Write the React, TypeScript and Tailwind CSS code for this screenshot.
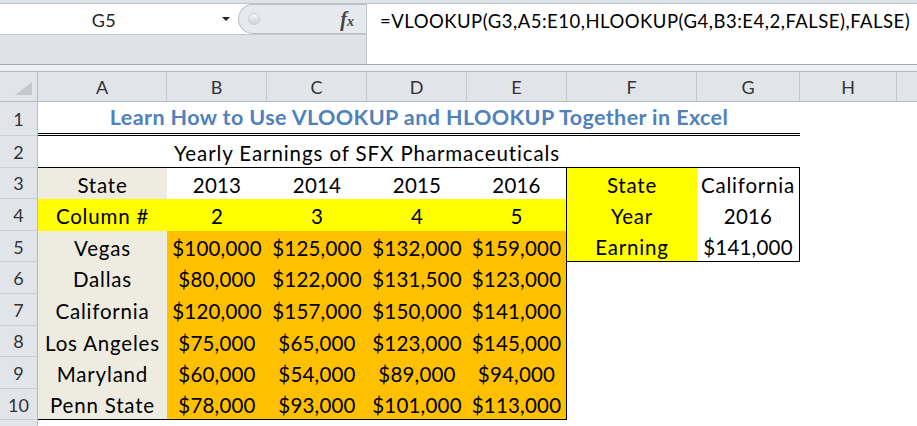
import React from 'react';

type CellProps = { cls: string; children?: React.ReactNode };

const Cell = ({ cls, children }: CellProps) => (
  <div
    className={`${cls} shrink-0 flex items-center justify-center pt-[3px] text-[20.5px] leading-none text-black whitespace-nowrap`}
  >
    {children}
  </div>
);

const Row = ({ num, hCls, children }: { num: string; hCls: string; children?: React.ReactNode }) => (
  <div className={`flex ${hCls}`}>
    <div className="w-[38px] shrink-0 flex items-center justify-center bg-[#e1e5ea] border-r border-b border-r-[#b3bac4] border-b-[#c9cfd7] text-[18px] text-[#333] pt-[2px]">
      {num}
    </div>
    {children}
  </div>
);

const states = ['Vegas', 'Dallas', 'California', 'Los Angeles', 'Maryland', 'Penn State'];
const values = [
  ['$100,000', '$125,000', '$132,000', '$159,000'],
  ['$80,000', '$122,000', '$131,500', '$123,000'],
  ['$120,000', '$157,000', '$150,000', '$141,000'],
  ['$75,000', '$65,000', '$123,000', '$145,000'],
  ['$60,000', '$54,000', '$89,000', '$94,000'],
  ['$78,000', '$93,000', '$101,000', '$113,000'],
];
const side: [string, string][] = [
  ['State', 'California'],
  ['Year', '2016'],
  ['Earning', '$141,000'],
];

export default function App() {
  return (
    <div className="w-[917px] h-[426px] overflow-hidden bg-white font-[Lato,sans-serif]">
      {/* formula bar */}
      <div className="h-[4px] bg-[#dfe3e8] border-b border-[#bcc3cb]" />
      <div className="flex h-[61px] border-b border-[#a3abb5]">
        <div className="w-[367px] shrink-0 flex flex-col border-r border-[#bfc5cd]">
          <div className="h-[31px] flex bg-white border-b border-[#c3c9d1]">
            <div className="w-[208px] flex items-center justify-center text-[18px] tracking-[0.5px] text-[#222] pt-[2px]">G5</div>
            <div className="w-[30px] flex items-center justify-start pl-[14px]">
              <div className="w-0 h-0 border-l-[4px] border-r-[4px] border-t-[4px] border-l-transparent border-r-transparent border-t-[#222]" />
            </div>
            <div className="flex-1 flex items-center rounded-l-full bg-[#e6e9ed] border-l border-t border-b border-[#b8bfc8] pl-[9px] pr-[12px]">
              <div className="w-[12px] h-[12px] rounded-full border border-[#c8cdd4] bg-gradient-to-b from-[#f4f5f7] to-[#cfd3d9]" />
              <div className="flex-1" />
              <span className="font-['Liberation_Serif',serif] italic font-bold text-[20px] text-[#444] leading-none">
                f<span className="text-[14px]">x</span>
              </span>
            </div>
          </div>
          <div className="flex-1 bg-[#dfe3e8]" />
        </div>
        <div className="flex-1 bg-white pl-[13px] pt-[8px] text-[18.5px] tracking-[0.5px] leading-none text-black whitespace-nowrap">
          =VLOOKUP(G3,A5:E10,HLOOKUP(G4,B3:E4,2,FALSE),FALSE)
        </div>
      </div>
      <div className="h-[6px] bg-[#eef0f3]" />

      {/* column headers */}
      <div className="flex h-[31px] border-t border-b border-[#b3bac4] bg-[#e1e5ea] text-[18px] text-[#333]">
        <div className="w-[38px] shrink-0 relative border-r border-[#b3bac4]">
          <svg className="absolute left-0 top-0" width="38" height="30" viewBox="0 0 38 30">
            <polygon points="15,23 32,23 32,10" fill="#c3c8cf" />
          </svg>
        </div>
        <div className="w-[129px] shrink-0 flex items-center justify-center border-r border-[#c3c9d1] pt-[2px]">A</div>
        <div className="w-[100px] shrink-0 flex items-center justify-center border-r border-[#c3c9d1] pt-[2px]">B</div>
        <div className="w-[100px] shrink-0 flex items-center justify-center border-r border-[#c3c9d1] pt-[2px]">C</div>
        <div className="w-[100px] shrink-0 flex items-center justify-center border-r border-[#c3c9d1] pt-[2px]">D</div>
        <div className="w-[100px] shrink-0 flex items-center justify-center border-r border-[#c3c9d1] pt-[2px]">E</div>
        <div className="w-[130px] shrink-0 flex items-center justify-center border-r border-[#c3c9d1] pt-[2px]">F</div>
        <div className="w-[103px] shrink-0 flex items-center justify-center border-r border-[#c3c9d1] pt-[2px]">G</div>
        <div className="w-[97px] shrink-0 flex items-center justify-center border-r border-[#c3c9d1] pt-[2px]">H</div>
        <div className="flex-1" />
      </div>

      {/* row 1 */}
      <Row num="1" hCls="h-[34px]">
        <div className="w-[762px] shrink-0 flex items-center justify-center border-b-[3px] border-double border-black text-[21.5px] tracking-[0.4px] font-bold text-[#4f81bd] leading-none whitespace-nowrap">
          Learn How to Use VLOOKUP and HLOOKUP Together in Excel
        </div>
      </Row>

      {/* row 2 */}
      <Row num="2" hCls="h-[31.6px]">
        <Cell cls="w-[129px] border-b border-black" />
        <Cell cls="w-[400px] border-b border-black tracking-[0.9px]">Yearly Earnings of SFX Pharmaceuticals</Cell>
        <Cell cls="w-[130px] border-b border-black" />
        <Cell cls="w-[103px] border-b border-black" />
      </Row>

      {/* row 3 */}
      <Row num="3" hCls="h-[31.6px]">
        <Cell cls="w-[129px] bg-[#eeece1] tracking-[0.8px]">State</Cell>
        <Cell cls="w-[100px] tracking-[0.2px]">2013</Cell>
        <Cell cls="w-[100px] tracking-[0.2px]">2014</Cell>
        <Cell cls="w-[100px] tracking-[0.2px]">2015</Cell>
        <Cell cls="w-[100px] tracking-[0.2px] border-r border-black">2016</Cell>
        <Cell cls="w-[130px] bg-[#ffff00] tracking-[0.8px]">{side[0][0]}</Cell>
        <Cell cls="w-[103px] tracking-[0.8px] border-r border-black">{side[0][1]}</Cell>
      </Row>

      {/* row 4 */}
      <Row num="4" hCls="h-[31.6px]">
        <Cell cls="w-[129px] bg-[#ffff00] tracking-[0.8px]">Column #</Cell>
        <Cell cls="w-[100px] bg-[#ffff00]">2</Cell>
        <Cell cls="w-[100px] bg-[#ffff00]">3</Cell>
        <Cell cls="w-[100px] bg-[#ffff00]">4</Cell>
        <Cell cls="w-[100px] bg-[#ffff00] border-r border-black">5</Cell>
        <Cell cls="w-[130px] bg-[#ffff00] tracking-[0.8px]">{side[1][0]}</Cell>
        <Cell cls="w-[103px] tracking-[0.2px] border-r border-black">{side[1][1]}</Cell>
      </Row>

      {/* rows 5-10 */}
      {states.map((s, i) => (
        <Row key={s} num={String(i + 5)} hCls="h-[31.6px]">
          <Cell cls={`w-[129px] bg-[#eeece1] tracking-[0.8px] ${i === 5 ? 'border-b border-black' : ''}`}>{s}</Cell>
          {values[i].map((v, j) => (
            <Cell
              key={j}
              cls={`w-[100px] bg-[#ffc000] tracking-[0.2px] ${j === 3 ? 'border-r border-black' : ''} ${i === 5 ? 'border-b border-black' : ''}`}
            >
              {v}
            </Cell>
          ))}
          {i === 0 && (
            <>
              <Cell cls="w-[130px] bg-[#ffff00] tracking-[0.8px] border-b border-black">{side[2][0]}</Cell>
              <Cell cls="w-[103px] tracking-[0.2px] border-r border-b border-black">{side[2][1]}</Cell>
            </>
          )}
        </Row>
      ))}

      {/* row 11 partial */}
      <Row num="" hCls="h-[31.6px]" />
    </div>
  );
}
